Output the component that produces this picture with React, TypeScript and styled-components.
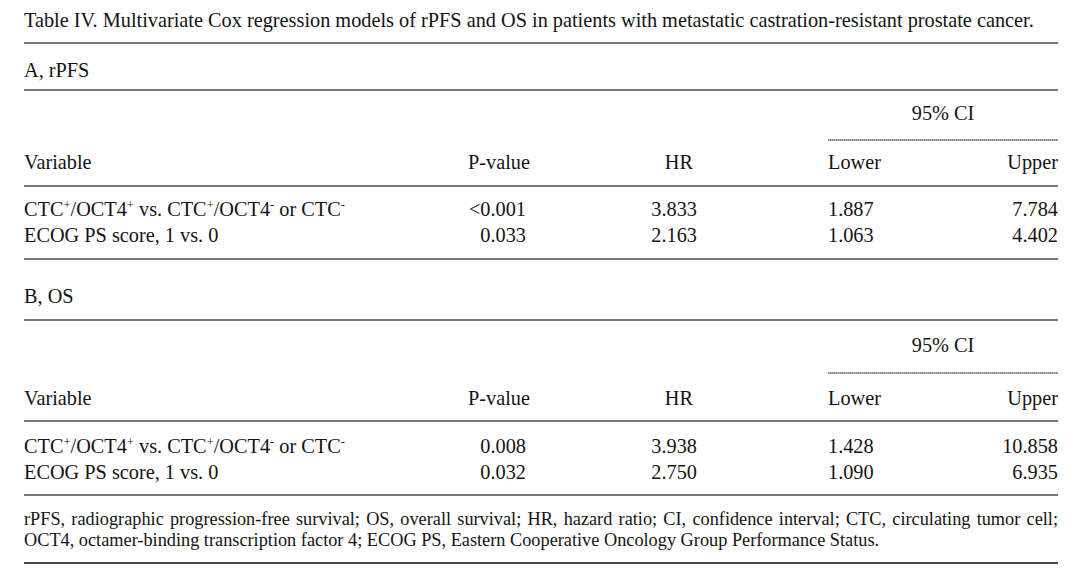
import React from 'react';
import styled, { createGlobalStyle } from 'styled-components';

const GlobalStyle = createGlobalStyle`
  html, body {
    margin: 0;
    padding: 0;
    background: #ffffff;
  }
  body {
    font-family: "Liberation Serif", "Times New Roman", serif;
    color: #141414;
  }
`;

type Row = {
  variable: React.ReactNode;
  p: string;
  hr: string;
  lower: string;
  upper: string;
};

const CTCRow = (
  <>
    CTC<sup>+</sup>/OCT4<sup>+</sup> vs. CTC<sup>+</sup>/OCT4<sup>-</sup> or CTC<sup>-</sup>
  </>
);

const sections: { label: string; rows: Row[] }[] = [
  {
    label: 'A, rPFS',
    rows: [
      { variable: CTCRow, p: '<0.001', hr: '3.833', lower: '1.887', upper: '7.784' },
      { variable: 'ECOG PS score, 1 vs. 0', p: '0.033', hr: '2.163', lower: '1.063', upper: '4.402' },
    ],
  },
  {
    label: 'B, OS',
    rows: [
      { variable: CTCRow, p: '0.008', hr: '3.938', lower: '1.428', upper: '10.858' },
      { variable: 'ECOG PS score, 1 vs. 0', p: '0.032', hr: '2.750', lower: '1.090', upper: '6.935' },
    ],
  },
];

const Page = styled.div`
  width: 1034px;
  padding: 0 22px 0 24px;
  font-size: 20.3px;
`;

const Title = styled.div`
  padding: 8px 0 10px;
  line-height: 24px;
  white-space: nowrap;
`;

const Rule = styled.div<{ $dark?: boolean }>`
  height: 2px;
  background: ${(p) => (p.$dark ? '#4a4a4a' : '#7a7a7a')};
`;

// section B sits a few px looser than section A in the original
const SectionLabel = styled.div<{ $loose?: boolean }>`
  line-height: 24px;
  padding: ${(p) => (p.$loose ? '24px 0 11px' : '14px 0 7px')};
`;

const Grid = styled.div`
  display: grid;
  grid-template-columns: 376px 130px 167px 243px 118px;
  line-height: 26px;
  sup {
    font-size: 12.5px;
    line-height: 0;
    vertical-align: 7px;
  }
`;

const CIHead = styled.div<{ $loose?: boolean }>`
  grid-column: 4 / 6;
  margin-left: 131px;
  padding-top: ${(p) => (p.$loose ? 11 : 9)}px;
  text-align: center;
`;

const Dotted = styled.div<{ $loose?: boolean }>`
  grid-column: 4 / 6;
  margin: ${(p) => (p.$loose ? '14px 0 11px 131px' : '13px 0 8px 131px')};
  height: 2px;
  background: repeating-linear-gradient(90deg, #858585 0 1px, #b0b0b0 1px 2px);
`;

const Cell = styled.div<{ $align?: 'left' | 'right'; $indent?: number; $pad?: number }>`
  text-align: ${(p) => p.$align ?? 'right'};
  padding-left: ${(p) => p.$indent ?? 0}px;
  padding-right: ${(p) => p.$pad ?? 0}px;
  white-space: nowrap;
`;

const HeadRule = styled.div<{ $loose?: boolean }>`
  grid-column: 1 / -1;
  height: 2px;
  margin: ${(p) => (p.$loose ? '9px 0 11px' : '10px 0 9px')};
  background: #7a7a7a;
`;

const BodyEnd = styled.div<{ $loose?: boolean }>`
  grid-column: 1 / -1;
  height: ${(p) => (p.$loose ? 9 : 10)}px;
`;

const Footnote = styled.p`
  margin: 0;
  padding: 13px 0 11px;
  font-size: 18.3px;
  line-height: 21px;
  text-align: justify;
`;

function Section({ label, rows, loose }: { label: string; rows: Row[]; loose?: boolean }) {
  return (
    <>
      <SectionLabel $loose={loose}>{label}</SectionLabel>
      <Rule />
      <Grid>
        <CIHead $loose={loose}>95% CI</CIHead>
        <Dotted $loose={loose} />
        <Cell $align="left">Variable</Cell>
        <Cell>P-value</Cell>
        <Cell $pad={4}>HR</Cell>
        <Cell $align="left" $indent={131}>Lower</Cell>
        <Cell>Upper</Cell>
        <HeadRule $loose={loose} />
        {rows.map((r, i) => (
          <React.Fragment key={i}>
            <Cell $align="left">{r.variable}</Cell>
            <Cell $pad={4}>{r.p}</Cell>
            <Cell>{r.hr}</Cell>
            <Cell $align="left" $indent={131}>{r.lower}</Cell>
            <Cell>{r.upper}</Cell>
          </React.Fragment>
        ))}
        <BodyEnd $loose={loose} />
      </Grid>
      <Rule />
    </>
  );
}

export default function App() {
  return (
    <>
      <GlobalStyle />
      <Page>
        <Title>
          Table IV. Multivariate Cox regression models of rPFS and OS in patients with metastatic
          castration-resistant prostate cancer.
        </Title>
        <Rule />
        {sections.map((s, i) => (
          <Section key={s.label} label={s.label} rows={s.rows} loose={i > 0} />
        ))}
        <Footnote>
          rPFS, radiographic progression-free survival; OS, overall survival; HR, hazard ratio; CI,
          confidence interval; CTC, circulating tumor cell; OCT4, octamer-binding transcription
          factor 4; ECOG PS, Eastern Cooperative Oncology Group Performance Status.
        </Footnote>
        <Rule $dark />
      </Page>
    </>
  );
}
